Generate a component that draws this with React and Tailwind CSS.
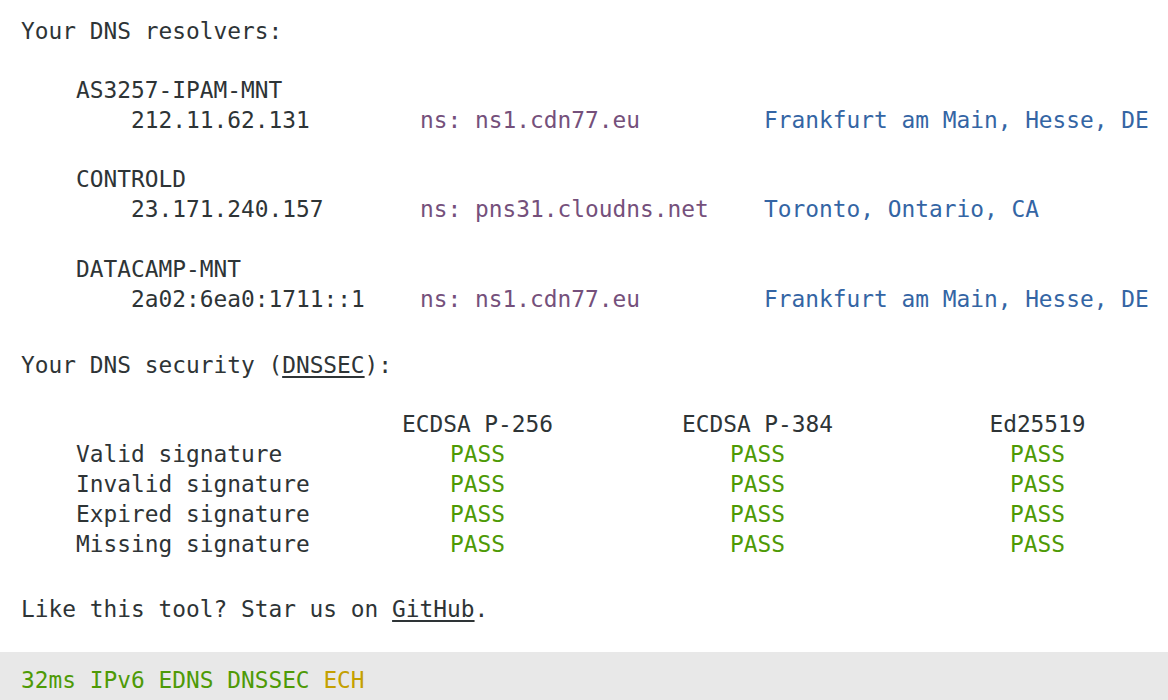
import React from "react";

const resolvers = [
  { name: "AS3257-IPAM-MNT", ip: "212.11.62.131", ns: "ns1.cdn77.eu", loc: "Frankfurt am Main, Hesse, DE" },
  { name: "CONTROLD", ip: "23.171.240.157", ns: "pns31.cloudns.net", loc: "Toronto, Ontario, CA" },
  { name: "DATACAMP-MNT", ip: "2a02:6ea0:1711::1", ns: "ns1.cdn77.eu", loc: "Frankfurt am Main, Hesse, DE" },
];

const rows = ["Valid signature", "Invalid signature", "Expired signature", "Missing signature"];

export default function App() {
  return (
    <div className="min-h-screen overflow-hidden bg-white text-[#2e3436] font-['DejaVu_Sans_Mono','Liberation_Mono',monospace] text-[22.84px] leading-[29.8px]">
      <div className="px-[21px] pt-[16.5px]">
        <p className="whitespace-pre">Your DNS resolvers:</p>

        <div className="mt-[29.8px] flex flex-col gap-[29.8px] pl-[55px]">
          {resolvers.map((r) => (
            <div key={r.name}>
              <div className="whitespace-pre">{r.name}</div>
              <div className="flex whitespace-pre pl-[55px]">
                <span className="w-[289px] shrink-0">{r.ip}</span>
                <span className="w-[344px] shrink-0 text-[#75507b]">ns: {r.ns}</span>
                <span className="shrink-0 text-[#3465a4]">{r.loc}</span>
              </div>
            </div>
          ))}
        </div>

        <p className="mt-[36.7px] whitespace-pre">
          Your DNS security (<a className="underline underline-offset-[3px]" href="#">DNSSEC</a>):
        </p>

        <div className="mt-[29.2px] ml-[55px] grid grid-cols-[261.5px_280px_280px_249.5px] whitespace-pre">
          <div className="h-[30px]"></div>
          <div className="h-[30px] text-center">ECDSA P-256</div>
          <div className="h-[30px] text-center">ECDSA P-384</div>
          <div className="h-[30px] text-center pl-[30.5px]">Ed25519</div>
          {rows.map((label) => (
            <React.Fragment key={label}>
              <div className="h-[30px]">{label}</div>
              <div className="h-[30px] text-center text-[#4e9a06]">PASS</div>
              <div className="h-[30px] text-center text-[#4e9a06]">PASS</div>
              <div className="h-[30px] text-center pl-[30.5px] text-[#4e9a06]">PASS</div>
            </React.Fragment>
          ))}
        </div>

        <p className="mt-[34.8px] whitespace-pre">
          Like this tool? Star us on <a className="underline underline-offset-[3px]" href="#">GitHub</a>.
        </p>
      </div>

      <footer className="mt-[27px] bg-[#e8e8e8] px-[21px] pt-[14.2px] pb-[20px] whitespace-pre">
        <span className="text-[#4e9a06]">32ms IPv6 EDNS DNSSEC</span>{" "}
        <span className="text-[#c4a000]">ECH</span>
      </footer>
    </div>
  );
}
